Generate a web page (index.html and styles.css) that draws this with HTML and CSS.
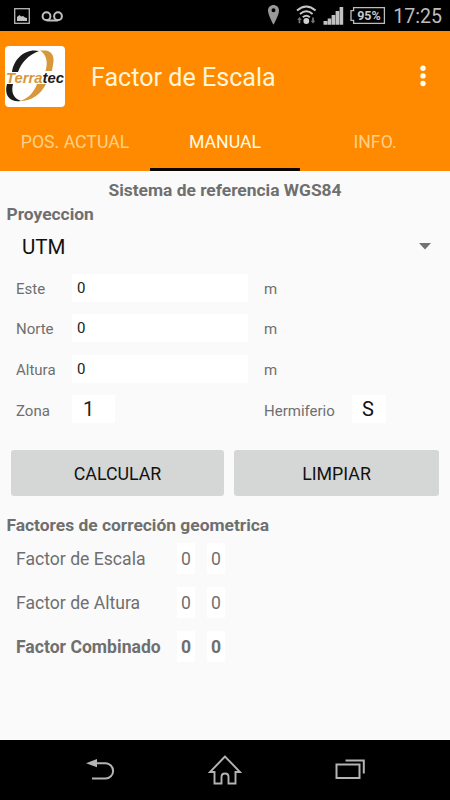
FILE: index.html
```
<!DOCTYPE html>
<html lang="es">
<head>
  <meta charset="UTF-8">
  <meta name="viewport" content="width=device-width, initial-scale=1.0">
  <title>Factor de Escala</title>
  <link rel="stylesheet" href="styles.css">
</head>
<body>
  <div class="status-bar">
    <svg class="status-icons" width="52" height="31" viewBox="0 0 52 31">
      <rect x="0.7" y="8.7" width="14.6" height="14.6" fill="none" stroke="#b8b8b8" stroke-width="1.3"/>
      <path d="M3 21v-4l2.500-2 1.500 1.500 2-.5 2 1.500 2 .5v3z" fill="#c4c4c4"/>
      <g fill="none" stroke="#c0c0c0" stroke-width="2">
        <circle cx="32.500" cy="16.200" r="3.900"/>
        <circle cx="44" cy="16.200" r="3.900"/>
        <path d="M32.500 20.500H44"/>
      </g>
    </svg>
    <svg class="status-signal" width="120" height="31" viewBox="0 0 120 31">
      <path fill-rule="evenodd" d="M5.500 5c-3 0-5.500 2.400-5.500 5.400 0 4.500 5.500 14.300 5.500 14.300S11 14.900 11 10.400C11 7.400 8.500 5 5.500 5zm0 3.200a2 2 0 1 1 0 4 2 2 0 0 1 0-4z" fill="#999"/>
      <g fill="none" stroke="#c8c8c8" stroke-width="2">
        <path d="M29 10.500q9.300-8 18.600 0M32 14q6.300-5.500 12.600 0M34.800 17.200q3.500-3 7 0"/>
      </g>
      <circle cx="38.300" cy="21" r="2.900" fill="#d0d0d0"/>
      <path d="M31.500 17l2.300 2.800h-1.400v3.400h-1.800v-3.400h-1.400zM45 23.500l-2.300-2.800h1.400v-3.200h1.800v3.200h1.400z" fill="#777"/>
      <path d="M55.500 21h3.900v3.700h-3.900zM59.700 18.500h3.500v6.200h-3.500zM63.600 15h3.600v9.700h-3.600zM67.600 11h3.600v13.700h-3.600zM71.600 7h3.600v17.700h-3.600z" fill="#c2c2c2"/>
      <path d="M85.600 7.600h30.800v15.800H85.600v-3H83v-9.800h2.600z" fill="none" stroke="#bdbdbd" stroke-width="1.300"/>
      <text x="101" y="20" text-anchor="middle" class="battery">95%</text>
    </svg>
    <span class="clock">17:25</span>
  </div>

  <header class="app-bar">
    <div class="toolbar">
      <svg class="logo" width="60" height="61" viewBox="0 0 60 61">
        <rect width="60" height="61" rx="4" fill="#fff"/>
        <path d="M34 5C21 2 9 12 7 26h6C16 17 23 9 34 5z" fill="#1b1b1b"/>
        <path d="M35 4.500h6c6 1 8 6 7.500 11L47 25h-6.500C43 17 42 9 35 4.500z" fill="#d8983a"/>
        <path d="M8 38H2c-3 10 2 19 14 17C8 52 6 46 8 38z" fill="#1b1b1b"/>
        <path d="M15 55c12 0 21-7 26-17h-9c-3 8-8 14-17 17z" fill="#d8983a"/>
        <text x="1" y="36.500" class="logo-text" textLength="58" lengthAdjust="spacingAndGlyphs"><tspan fill="#d8983a">Terra</tspan><tspan fill="#1b1b1b">tec</tspan></text>
      </svg>
      <h1>Factor de Escala</h1>
      <svg class="overflow" width="6" height="22" viewBox="0 0 6 22">
        <g fill="#fffdf0"><circle cx="3" cy="3.300" r="2.700"/><circle cx="3" cy="10.900" r="2.700"/><circle cx="3" cy="18.500" r="2.700"/></g>
      </svg>
    </div>
    <nav class="tabs">
      <a class="tab">POS. ACTUAL</a>
      <a class="tab active">MANUAL</a>
      <a class="tab">INFO.</a>
    </nav>
  </header>

  <main class="content">
    <h2 class="reference">Sistema de referencia WGS84</h2>
    <h2 class="section">Proyeccion</h2>
    <div class="spinner">
      <span>UTM</span>
      <svg width="12" height="7" viewBox="0 0 12 7"><path d="M0 0h12L6 6.500z" fill="#737373"/></svg>
    </div>

    <div class="form">
      <div class="row"><span class="label">Este</span><span class="field">0</span><span class="unit">m</span></div>
      <div class="row"><span class="label">Norte</span><span class="field">0</span><span class="unit">m</span></div>
      <div class="row"><span class="label">Altura</span><span class="field">0</span><span class="unit">m</span></div>
      <div class="row zone"><span class="label">Zona</span><span class="field small">1</span><span class="label hemi">Hermiferio</span><span class="field letter">S</span></div>
    </div>

    <div class="buttons">
      <button class="btn calc">CALCULAR</button>
      <button class="btn clear">LIMPIAR</button>
    </div>

    <h2 class="section factors">Factores de correción geometrica</h2>
    <div class="results">
      <div class="result"><span class="name">Factor de Escala</span><span class="value">0</span><span class="value">0</span></div>
      <div class="result"><span class="name">Factor de Altura</span><span class="value">0</span><span class="value">0</span></div>
      <div class="result total"><span class="name">Factor Combinado</span><span class="value">0</span><span class="value">0</span></div>
    </div>
  </main>

  <footer class="nav-bar">
    <svg width="30" height="32" viewBox="0 0 30 32">
      <path d="M10 9.300h10.500a7.600 7.600 0 0 1 0 15.200H7" fill="none" stroke="#b4b4b4" stroke-width="2"/>
      <path d="M1 9.300l11-4.300v8.300z" fill="#b4b4b4"/>
    </svg>
    <svg width="34" height="32" viewBox="0 0 34 32">
      <path d="M17 2.500L2 18h4.500v11.500h7v-6.500q0-3.500 3.500-3.500t3.500 3.500v6.500h7V18H32z" fill="none" stroke="#b4b4b4" stroke-width="1.900"/>
    </svg>
    <svg width="30" height="32" viewBox="0 0 30 32">
      <path d="M1.500 10.500h23v13.500h-23zM10.500 6.500h18.300v13" fill="none" stroke="#b4b4b4" stroke-width="2"/>
    </svg>
  </footer>
</body>
</html>
```
FILE: styles.css
```
* { box-sizing: border-box; }
body {
  margin: 0; width: 450px; height: 800px; display: flex; flex-direction: column;
  font-family: Roboto, "Liberation Sans", sans-serif; background: #fafafa; color: #6f6f6f; overflow: hidden;
}
h1, h2 { margin: 0; }
svg { display: block; flex: none; }

.status-bar { height: 31px; background: #000; display: flex; align-items: center; padding: 0 8px 0 14px; flex: none; }
.status-signal { margin-left: auto; }
.battery { font-size: 12.5px; font-weight: 700; fill: #c8c8c8; }
.clock { width: 49px; margin-left: 5px; padding-top: 2px; font-size: 19.6px; line-height: 31px; color: #bdbdbd; text-align: right; white-space: nowrap; }

.app-bar { height: 140px; background: #ff8a00; flex: none; }
.toolbar { height: 90px; display: flex; align-items: center; padding: 0 24px 0 5px; }
.toolbar h1 { margin-left: 26px; padding-top: 2px; font-size: 25.1px; font-weight: 400; color: #fff5d8; }
.overflow { margin-left: auto; }
.tabs { display: flex; height: 50px; }
.tab { flex: 1; text-align: center; line-height: 43px; font-size: 17.7px; color: #ffd089; border-bottom: 3px solid transparent; }
.tab.active { color: #fffbe8; border-bottom-color: #0d0500; }
.logo-text { font-family: "Liberation Sans", sans-serif; font-size: 15px; font-weight: 700; font-style: italic; }

.content { flex: 1; padding-top: 7px; }
.reference { text-align: center; font-size: 17.4px; line-height: 24px; }
.section { padding-left: 6.5px; font-size: 17.4px; line-height: 24px; }
.spinner { height: 41px; padding: 0 19px 0 22px; display: flex; align-items: center; justify-content: space-between; font-size: 20.5px; color: #111; }

.form { padding: 7px 0 0 16px; display: flex; flex-direction: column; gap: 12px; }
.row { display: flex; align-items: center; height: 28.3px; font-size: 15px; }
.label { width: 56px; padding-top: 2px; }
.field { width: 176px; height: 28px; padding-left: 5px; line-height: 29px; background: #fff; color: #222; }
.unit { margin-left: 16px; padding-top: 2px; }
.small { width: 43px; padding-left: 11px; font-size: 20px; }
.letter { width: 34px; padding-left: 10px; font-size: 20px; color: #111; }
.zone .label { padding-top: 4px; }
.zone .hemi { width: 88px; margin-left: 149px; }

.buttons { display: flex; gap: 10px; padding: 27px 11px 0; }
.btn { height: 46px; padding: 0; border: 0; border-radius: 3px; background: #d5d7d6; color: #111; font-family: inherit; font-size: 17.8px; }
.calc { width: 213px; }
.clear { width: 205px; }

.factors { padding-top: 17px; }
.results { display: flex; flex-direction: column; gap: 13px; padding: 6px 0 0 16px; }
.result { display: flex; height: 31px; line-height: 33px; font-size: 17.6px; }
.name { width: 161px; white-space: nowrap; }
.value { width: 18px; margin-right: 12px; background: #fff; text-align: center; }
.total { font-weight: 700; }

.nav-bar { height: 60px; flex: none; background: #000; display: flex; align-items: center; justify-content: space-between; padding: 0 85px; }
```
